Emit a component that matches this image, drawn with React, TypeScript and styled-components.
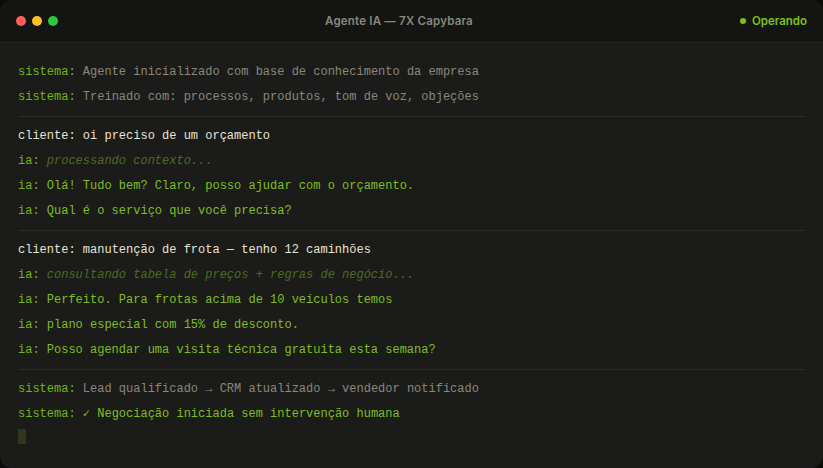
import React from "react";
import styled, { createGlobalStyle } from "styled-components";

const Global = createGlobalStyle`
  html, body { margin: 0; padding: 0; background: #0c0c0b; }
  #root { width: 823px; height: 468px; }
`;

const Window = styled.div`
  width: 823px;
  height: 468px;
  box-sizing: border-box;
  background: #1b1c1a;
  border-radius: 12px;
  overflow: hidden;
  display: flex;
  flex-direction: column;
`;

const TitleBar = styled.div`
  height: 42px;
  flex: none;
  background: #141513;
  border-bottom: 1px solid #262723;
  display: flex;
  justify-content: space-between;
  align-items: center;
  padding: 0 16px;
`;

const Dots = styled.div`
  display: flex;
  gap: 6px;
`;

const Dot = styled.span<{ $c: string }>`
  width: 10px;
  height: 10px;
  border-radius: 50%;
  background: ${(p) => p.$c};
`;

const Title = styled.div`
  font-family: "Inter", "Lato", sans-serif;
  font-weight: 600;
  font-size: 11.5px;
  color: #8a877b;
  letter-spacing: 0.2px;
`;

const Status = styled.div`
  display: flex;
  align-items: center;
  gap: 6px;
  font-family: "Inter", "Lato", sans-serif;
  font-weight: 600;
  font-size: 11.5px;
  color: #7cc11f;
`;

const StatusDot = styled.span`
  width: 6px;
  height: 6px;
  border-radius: 50%;
  background: #7cc11f;
`;

const Body = styled.div`
  padding: 17px 18px 0 18px;
  display: flex;
  flex-direction: column;
  font-family: "Liberation Mono", "Courier New", monospace;
  font-size: 12px;
`;

const Line = styled.div`
  line-height: 25px;
  height: 25px;
  white-space: pre;
`;

const Sep = styled.div`
  border-top: 1px solid #2b2c28;
  margin: 6px 0 7px 0;
`;

type Tone = "sys" | "client" | "ia" | "dim" | "ok";

const toneColor: Record<Tone, string> = {
  sys: "#8a877a",
  client: "#e8e3d2",
  ia: "#7fbd24",
  dim: "#4d6a22",
  ok: "#7fbd24",
};

const Label = styled.span<{ $client?: boolean }>`
  color: ${(p) => (p.$client ? "#e8e3d2" : "#72b31a")};
`;

const Text = styled.span<{ $tone: Tone }>`
  color: ${(p) => toneColor[p.$tone]};
  font-style: ${(p) => (p.$tone === "dim" ? "italic" : "normal")};
`;

const Cursor = styled.div`
  width: 8px;
  height: 15px;
  margin-top: 2px;
  background: #30371c;
`;

type Row = { who: string; tone: Tone; text: string };

const groups: Row[][] = [
  [
    { who: "sistema", tone: "sys", text: "Agente inicializado com base de conhecimento da empresa" },
    { who: "sistema", tone: "sys", text: "Treinado com: processos, produtos, tom de voz, objeções" },
  ],
  [
    { who: "cliente", tone: "client", text: "oi preciso de um orçamento" },
    { who: "ia", tone: "dim", text: "processando contexto..." },
    { who: "ia", tone: "ia", text: "Olá! Tudo bem? Claro, posso ajudar com o orçamento." },
    { who: "ia", tone: "ia", text: "Qual é o serviço que você precisa?" },
  ],
  [
    { who: "cliente", tone: "client", text: "manutenção de frota — tenho 12 caminhões" },
    { who: "ia", tone: "dim", text: "consultando tabela de preços + regras de negócio..." },
    { who: "ia", tone: "ia", text: "Perfeito. Para frotas acima de 10 veículos temos" },
    { who: "ia", tone: "ia", text: "plano especial com 15% de desconto." },
    { who: "ia", tone: "ia", text: "Posso agendar uma visita técnica gratuita esta semana?" },
  ],
  [
    { who: "sistema", tone: "sys", text: "Lead qualificado → CRM atualizado → vendedor notificado" },
    { who: "sistema", tone: "ok", text: "✓ Negociação iniciada sem intervenção humana" },
  ],
];

export default function App() {
  return (
    <>
      <Global />
      <Window>
        <TitleBar>
          <Dots>
            <Dot $c="#ff5f57" />
            <Dot $c="#febc2e" />
            <Dot $c="#28c840" />
          </Dots>
          <Title>Agente IA — 7X Capybara</Title>
          <Status>
            <StatusDot />
            Operando
          </Status>
        </TitleBar>
        <Body>
          {groups.map((g, gi) => (
            <React.Fragment key={gi}>
              {gi > 0 && <Sep />}
              {g.map((r, ri) => (
                <Line key={ri}>
                  <Label $client={r.tone === "client"}>{r.who}:</Label>{" "}
                  <Text $tone={r.tone}>{r.text}</Text>
                </Line>
              ))}
            </React.Fragment>
          ))}
          <Cursor />
        </Body>
      </Window>
    </>
  );
}
